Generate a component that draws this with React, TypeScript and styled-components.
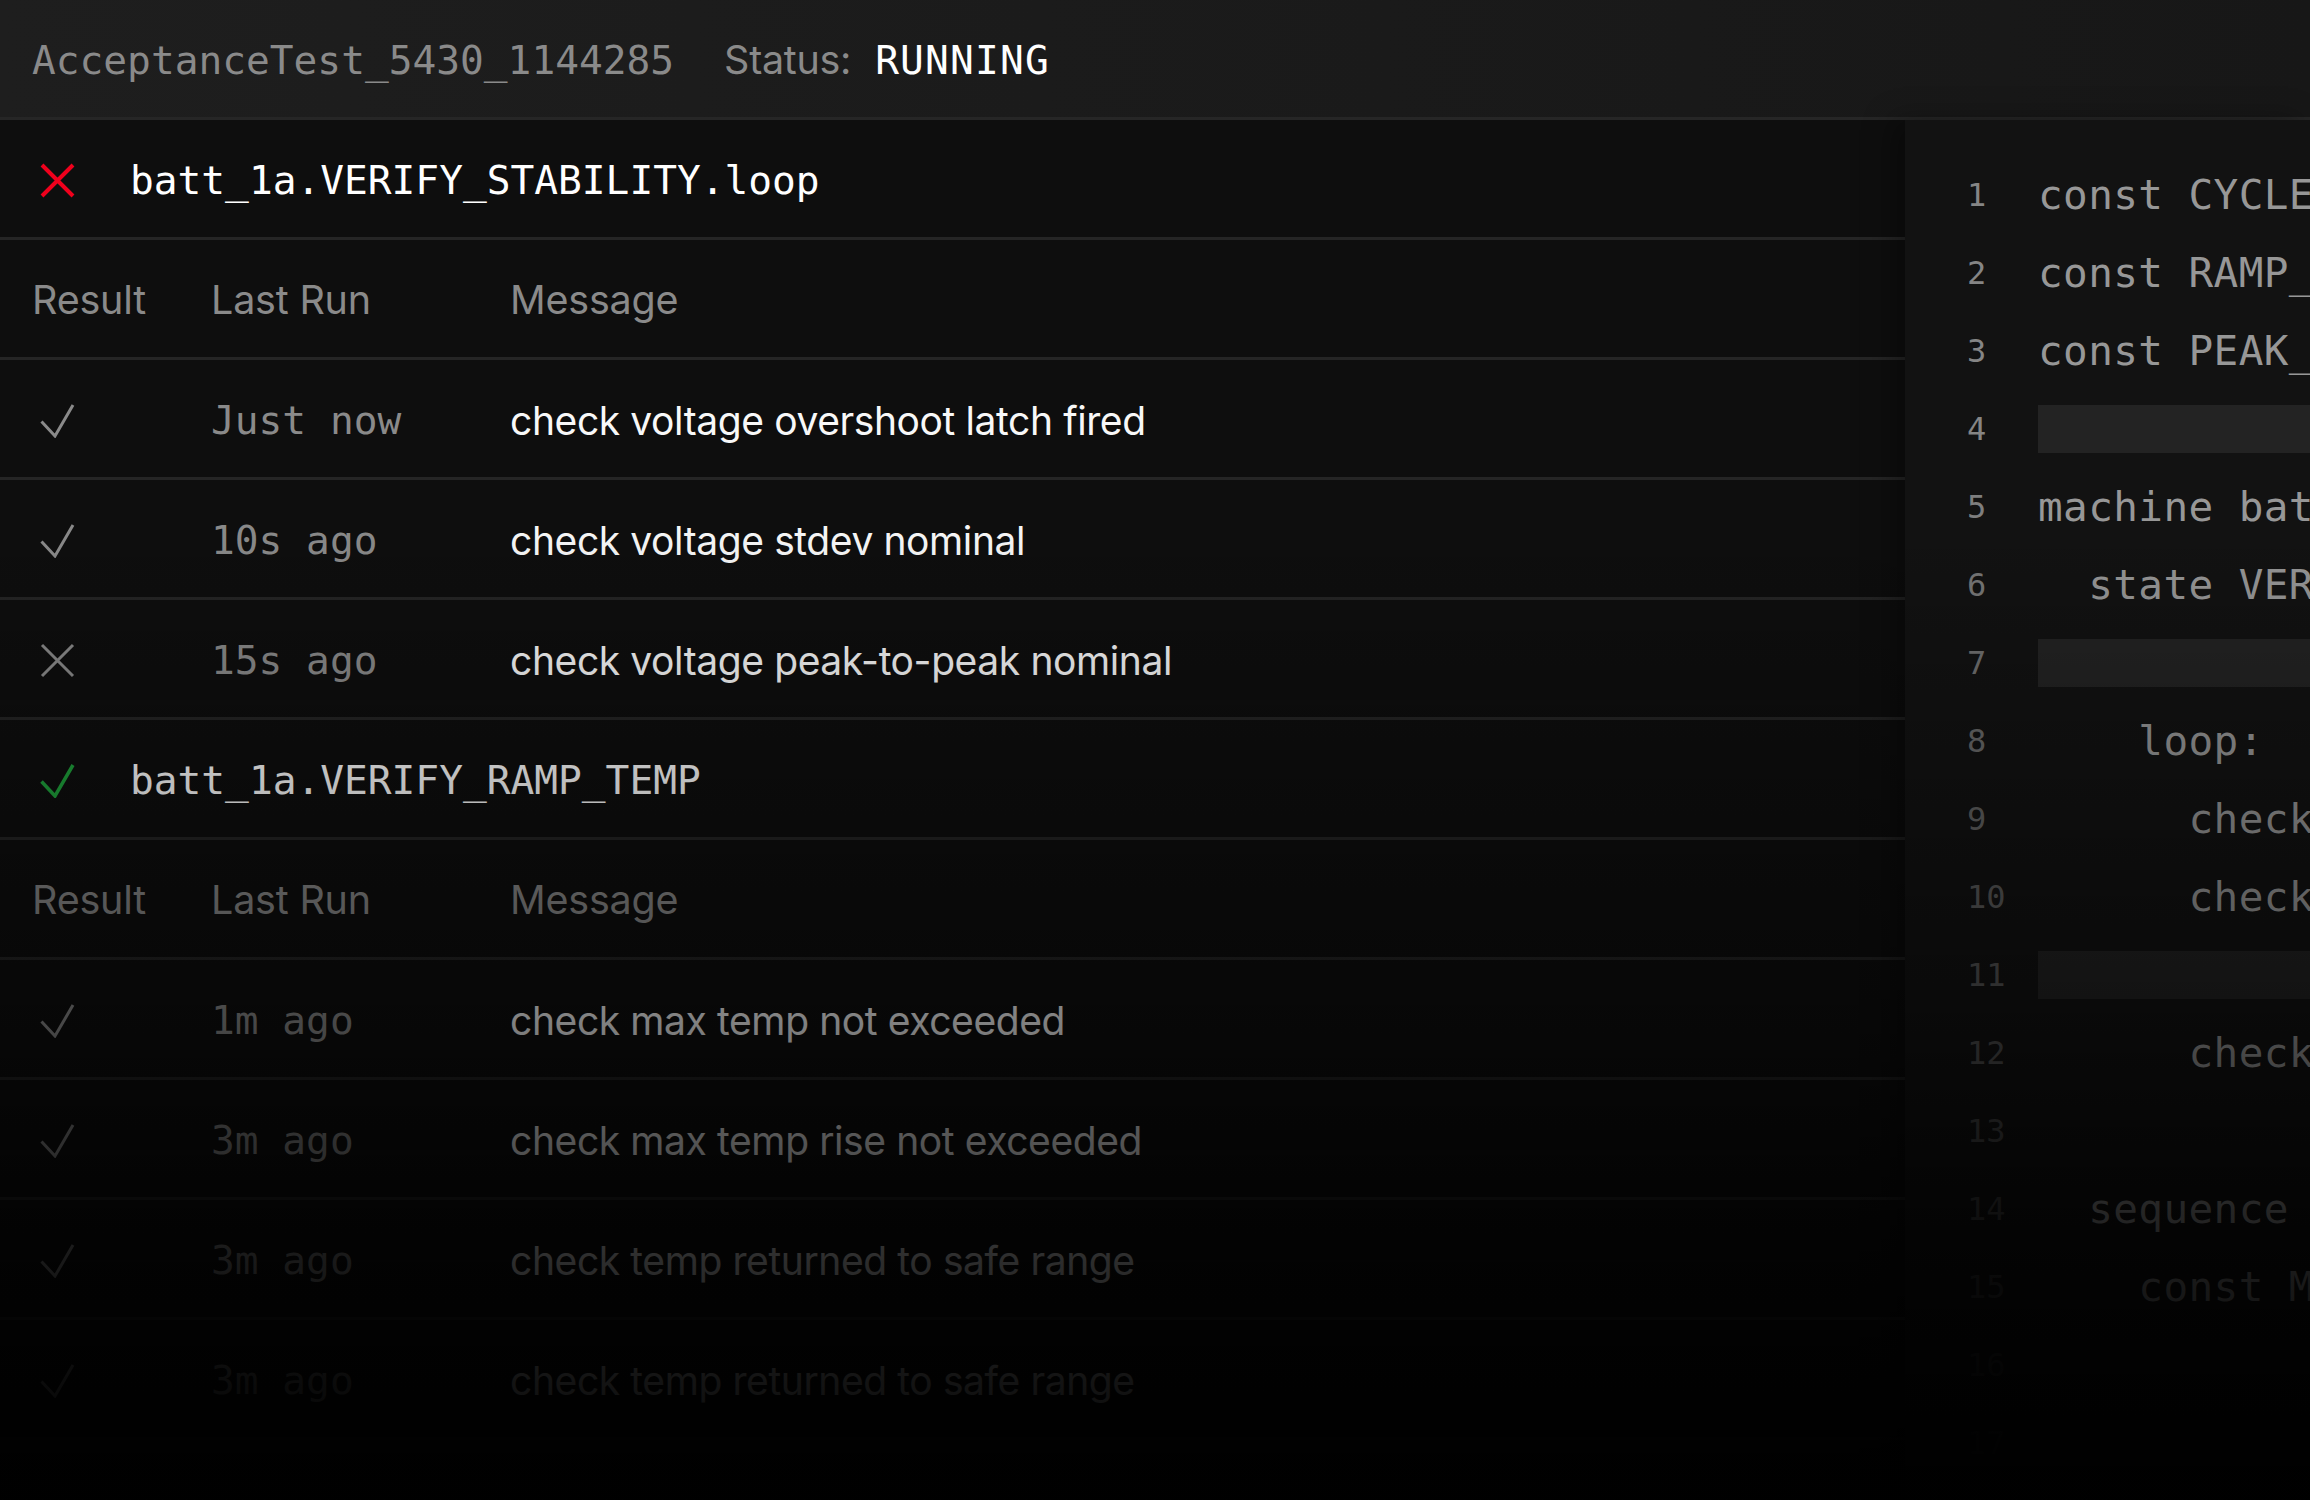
import React from 'react';
import styled, { createGlobalStyle } from 'styled-components';

const MONO = `"DejaVu Sans Mono", "Liberation Mono", monospace`;
const SANS = `Inter, "Liberation Sans", sans-serif`;

const Global = createGlobalStyle`
  html, body { margin: 0; padding: 0; background: #000; }
  #root { width: 2310px; height: 1500px; overflow: hidden; }
`;

const Page = styled.div`
  position: relative;
  width: 2310px;
  height: 1500px;
  overflow: hidden;
  background: #0e0e0e;
  display: flex;
  flex-direction: column;
`;

const TopBar = styled.header`
  flex: none;
  height: 115px;
  padding-top: 2px;
  border-bottom: 3px solid #262626;
  background: linear-gradient(90deg, #1e1e1e 0%, #1a1a1a 60%, #171717 100%);
  display: flex;
  align-items: center;
  padding-left: 32px;
`;

const RunId = styled.span`
  font-family: ${MONO};
  font-size: 39.5px;
  color: #8a8a8a;
  margin-right: 50px;
`;

const StatusLabel = styled.span`
  font-family: ${SANS};
  font-size: 39.5px;
  letter-spacing: -0.3px;
  color: #8a8a8a;
  margin-right: 24px;
`;

const StatusValue = styled.span`
  font-family: ${MONO};
  font-size: 39.5px;
  letter-spacing: 1.2px;
  color: #ffffff;
`;

const Body = styled.div`
  flex: 1;
  display: flex;
  min-height: 0;
`;

const List = styled.section`
  flex: none;
  width: 1905px;
  background: #0e0e0e;
`;

const GroupHeader = styled.div`
  height: 114px;
  padding-top: 3px;
  border-bottom: 3px solid #252525;
  display: flex;
  align-items: center;
  padding-left: 40px;
  gap: 55px;
`;

const GroupTitle = styled.span`
  font-family: ${MONO};
  font-size: 39.5px;
  color: #ffffff;
`;

const Row = styled.div`
  height: 114px;
  padding-top: 3px;
  border-bottom: 3px solid #252525;
  display: grid;
  grid-template-columns: 179px 299px 1fr;
  align-items: center;
  padding-left: 32px;
`;

const ColHead = styled.span`
  font-family: ${SANS};
  font-size: 39.5px;
  letter-spacing: -0.2px;
  color: #8a8a8a;
`;

const IconCell = styled.div`
  display: flex;
  padding-left: 8px;
`;

const Time = styled.span`
  font-family: ${MONO};
  font-size: 39.5px;
  color: #8a8a8a;
`;

const Message = styled.span`
  font-family: ${SANS};
  font-size: 39px;
  letter-spacing: -0.4px;
  color: #f8f8f8;
`;

const Code = styled.section`
  position: relative;
  flex: 1;
  background: #121212;
  padding-top: 36px;
  box-shadow: -12px 0 28px rgba(0, 0, 0, 0.35);
  overflow: hidden;
`;

const CodeLine = styled.div`
  display: grid;
  grid-template-columns: 71px 1fr;
  align-items: center;
  height: 78px;
  padding-left: 62px;
`;

const LineNo = styled.span<{ $fade: number }>`
  font-family: ${MONO};
  font-size: 32px;
  color: #858585;
  opacity: ${(p) => p.$fade};
`;

const CodeText = styled.span`
  font-family: ${MONO};
  font-size: 41px;
  letter-spacing: 0.4px;
  color: #979797;
  white-space: pre;
`;

const Highlight = styled.div`
  height: 48px;
  background: #232323;
`;

const Fade = styled.div`
  position: absolute;
  inset: 0;
  pointer-events: none;
  background: linear-gradient(
    to bottom,
    rgba(0, 0, 0, 0) 0px,
    rgba(0, 0, 0, 0) 520px,
    rgba(0, 0, 0, 0.25) 780px,
    rgba(0, 0, 0, 0.48) 1020px,
    rgba(0, 0, 0, 0.66) 1140px,
    rgba(0, 0, 0, 0.82) 1260px,
    rgba(0, 0, 0, 0.92) 1380px,
    rgba(0, 0, 0, 0.98) 1480px
  );
`;

type Kind = 'pass' | 'fail';

const StatusIcon: React.FC<{ kind: Kind; color: string; weight?: number }> = ({ kind, color, weight = 3 }) =>
  kind === 'pass' ? (
    <svg width="35" height="35" viewBox="0 0 35 35" aria-hidden>
      <polyline points="1.5,18.5 15,33 33,2" fill="none" stroke={color} strokeWidth={weight} strokeLinejoin="miter" />
    </svg>
  ) : (
    <svg width="35" height="35" viewBox="0 0 35 35" aria-hidden>
      <path d="M2 2 L33 33 M33 2 L2 33" fill="none" stroke={color} strokeWidth={weight} />
    </svg>
  );

type Check = { kind: Kind; time: string; msg: string };
type Group = { kind: Kind; title: string; checks: Check[] };

const groups: Group[] = [
  {
    kind: 'fail',
    title: 'batt_1a.VERIFY_STABILITY.loop',
    checks: [
      { kind: 'pass', time: 'Just now', msg: 'check voltage overshoot latch fired' },
      { kind: 'pass', time: '10s ago', msg: 'check voltage stdev nominal' },
      { kind: 'fail', time: '15s ago', msg: 'check voltage peak-to-peak nominal' },
    ],
  },
  {
    kind: 'pass',
    title: 'batt_1a.VERIFY_RAMP_TEMP',
    checks: [
      { kind: 'pass', time: '1m ago', msg: 'check max temp not exceeded' },
      { kind: 'pass', time: '3m ago', msg: 'check max temp rise not exceeded' },
      { kind: 'pass', time: '3m ago', msg: 'check temp returned to safe range' },
      { kind: 'pass', time: '3m ago', msg: 'check temp returned to safe range' },
    ],
  },
];

const code: (string | null)[] = [
  'const CYCLE_COUNT = 5',
  'const RAMP_RATE_C = 2.5',
  'const PEAK_TOL_V = 0.05',
  null,
  'machine batt_1a {',
  '  state VERIFY_STABILITY {',
  null,
  '    loop:',
  '      check voltage.overshoot',
  '      check voltage.stdev',
  null,
  '      check voltage.p2p',
  '',
  '  sequence VERIFY_RAMP_TEMP {',
  '    const MAX_TEMP = 45',
  '',
  '',
];

export default function App() {
  return (
    <>
      <Global />
      <Page>
        <TopBar>
          <RunId>AcceptanceTest_5430_1144285</RunId>
          <StatusLabel>Status:</StatusLabel>
          <StatusValue>RUNNING</StatusValue>
        </TopBar>
        <Body>
          <List>
            {groups.map((g) => (
              <React.Fragment key={g.title}>
                <GroupHeader>
                  <StatusIcon
                    kind={g.kind}
                    color={g.kind === 'fail' ? '#f0001c' : '#1fa33c'}
                    weight={g.kind === 'fail' ? 4 : 3.5}
                  />
                  <GroupTitle>{g.title}</GroupTitle>
                </GroupHeader>
                <Row>
                  <ColHead>Result</ColHead>
                  <ColHead>Last Run</ColHead>
                  <ColHead>Message</ColHead>
                </Row>
                {g.checks.map((c, i) => (
                  <Row key={i}>
                    <IconCell>
                      <StatusIcon kind={c.kind} color="#8a8a8a" />
                    </IconCell>
                    <Time>{c.time}</Time>
                    <Message>{c.msg}</Message>
                  </Row>
                ))}
              </React.Fragment>
            ))}
          </List>
          <Code>
            {code.map((line, i) => (
              <CodeLine key={i}>
                <LineNo $fade={Math.max(0.25, 1 - Math.max(0, i - 3) * 0.06)}>{i + 1}</LineNo>
                {line === null ? <Highlight /> : <CodeText>{line}</CodeText>}
              </CodeLine>
            ))}
          </Code>
        </Body>
        <Fade />
      </Page>
    </>
  );
}
